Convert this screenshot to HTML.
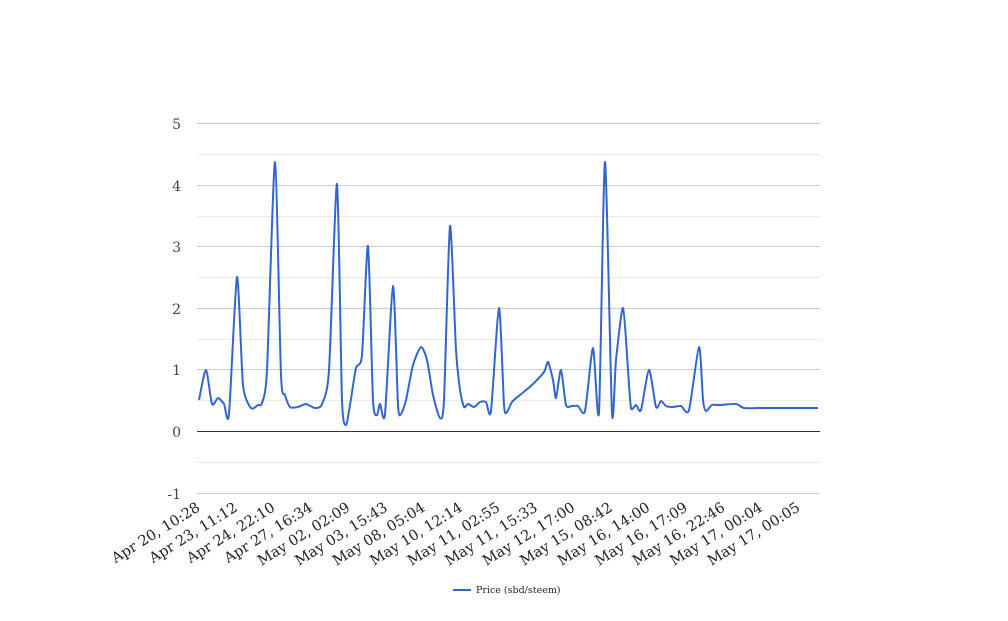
<!DOCTYPE html>
<html><head><style>
body{margin:0;background:#fff;width:1008px;height:616px;overflow:hidden}
text{font-family:"DejaVu Serif","Liberation Serif",serif}
</style></head><body>
<svg width="1008" height="616" xmlns="http://www.w3.org/2000/svg">
<g stroke="#ebebeb" stroke-width="1">
<line x1="197" x2="820" y1="154.5" y2="154.5"/><line x1="197" x2="820" y1="216.5" y2="216.5"/>
<line x1="197" x2="820" y1="277.5" y2="277.5"/><line x1="197" x2="820" y1="339.5" y2="339.5"/>
<line x1="197" x2="820" y1="400.5" y2="400.5"/><line x1="197" x2="820" y1="462.5" y2="462.5"/>
</g>
<g stroke="#cccccc" stroke-width="1">
<line x1="197" x2="820" y1="123.5" y2="123.5"/><line x1="197" x2="820" y1="185.5" y2="185.5"/>
<line x1="197" x2="820" y1="246.5" y2="246.5"/><line x1="197" x2="820" y1="308.5" y2="308.5"/>
<line x1="197" x2="820" y1="369.5" y2="369.5"/><line x1="197" x2="820" y1="493.5" y2="493.5"/>
</g>
<line x1="197" x2="820" y1="431.5" y2="431.5" stroke="#333" stroke-width="1"/>
<g font-size="14" fill="#444" text-anchor="end">
<text x="181" y="129">5</text><text x="181" y="191">4</text><text x="181" y="252">3</text>
<text x="181" y="314">2</text><text x="181" y="375">1</text><text x="181" y="437">0</text><text x="181" y="499">-1</text>
</g>
<polyline id="pl" fill="none" stroke="#3366cc" stroke-width="2" stroke-linejoin="round" points="199,400 206,370 212,404 218,398 224,404 229,414 237,277 243,385 251,408 258,405 262,403 267,370 275,162 281,375 285,395 290,407 298,407 306,404 315,408 322,404 329,370 337,184 342,400 346,425 350,405 356,368 362,355 368,246 373,400 377,415 380,404 385,414 393,286 398,405 401,414 406,400 413,365 421,347 427,360 433,395 440,418 444,400 450,226 456,350 460,390 464,407 468,404 474,407 480,402 486,402 491,411 499,308 504,405 507,412 512,402 520,395 532,385 544,372 548,362 553,380 556,398 561,370 566,405 572,406 578,406 585,411 593,348 599,412 605,162 612,413 616,360 623,308 628,370 631,408 636,405 641,410 649,370 656,407 661,401 666,406 673,407 681,406 689,410 699,347 703,400 706,411 712,405 720,405 736,404 744,408 760,408 780,408 818,408"/>
<path id="pc" fill="none" stroke="#3366cc" stroke-width="2" stroke-linejoin="round" d=""/>
<g font-size="14.5" fill="#222" text-anchor="end">
<text transform="translate(201,510) rotate(-32)">Apr 20, 10:28</text>
<text transform="translate(238.5,510) rotate(-32)">Apr 23, 11:12</text>
<text transform="translate(276,510) rotate(-32)">Apr 24, 22:10</text>
<text transform="translate(313.5,510) rotate(-32)">Apr 27, 16:34</text>
<text transform="translate(351,510) rotate(-32)">May 02, 02:09</text>
<text transform="translate(388.5,510) rotate(-32)">May 03, 15:43</text>
<text transform="translate(426,510) rotate(-32)">May 08, 05:04</text>
<text transform="translate(463.5,510) rotate(-32)">May 10, 12:14</text>
<text transform="translate(501,510) rotate(-32)">May 11, 02:55</text>
<text transform="translate(538.5,510) rotate(-32)">May 11, 15:33</text>
<text transform="translate(576,510) rotate(-32)">May 12, 17:00</text>
<text transform="translate(613.5,510) rotate(-32)">May 15, 08:42</text>
<text transform="translate(651,510) rotate(-32)">May 16, 14:00</text>
<text transform="translate(688.5,510) rotate(-32)">May 16, 17:09</text>
<text transform="translate(726,510) rotate(-32)">May 16, 22:46</text>
<text transform="translate(763.5,510) rotate(-32)">May 17, 00:04</text>
<text transform="translate(801,510) rotate(-32)">May 17, 00:05</text>
</g>
<line x1="453" x2="471" y1="590" y2="590" stroke="#3366cc" stroke-width="2"/>
<text x="476" y="593" font-size="9.5" fill="#222">Price (sbd/steem)</text>
</svg>
<script>
var pl=document.getElementById('pl');
var pts=pl.getAttribute('points').trim().split(/\s+/).map(function(s){return s.split(',').map(Number)});
var d='M'+pts[0][0]+','+pts[0][1];
for(var i=0;i<pts.length-1;i++){
 var p0=pts[Math.max(i-1,0)],p1=pts[i],p2=pts[i+1],p3=pts[Math.min(i+2,pts.length-1)];
 var t=0.35/3;
 var c1x=p1[0]+(p2[0]-p0[0])*t,c1y=p1[1]+(p2[1]-p0[1])*t;
 var c2x=p2[0]-(p3[0]-p1[0])*t,c2y=p2[1]-(p3[1]-p1[1])*t;
 d+=' C'+c1x.toFixed(1)+','+c1y.toFixed(1)+' '+c2x.toFixed(1)+','+c2y.toFixed(1)+' '+p2[0]+','+p2[1];
}
document.getElementById('pc').setAttribute('d',d);
pl.style.display='none';
</script>
</body></html>
